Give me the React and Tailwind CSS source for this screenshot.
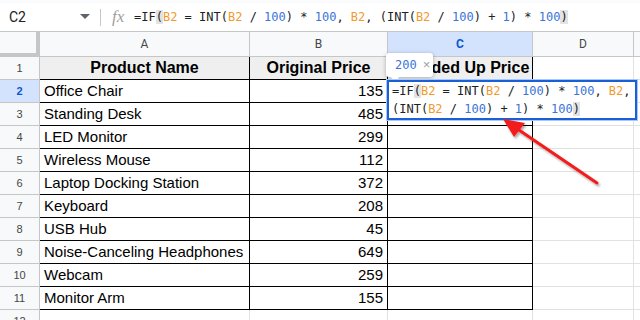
import React from "react";

const rows = [
  ["Office Chair", 135],
  ["Standing Desk", 485],
  ["LED Monitor", 299],
  ["Wireless Mouse", 112],
  ["Laptop Docking Station", 372],
  ["Keyboard", 208],
  ["USB Hub", 45],
  ["Noise-Canceling Headphones", 649],
  ["Webcam", 259],
  ["Monitor Arm", 155],
];

const mono = { fontFamily: '"DejaVu Sans Mono", "Liberation Mono", monospace' };

function Tok({ t, k }) {
  if (k === "o") return <span className="text-[#f29a2e]">{t}</span>;
  if (k === "b") return <span className="text-[#3a74d9]">{t}</span>;
  if (k === "h") return <span className="bg-[#e3e3e3]">{t}</span>;
  return <span>{t}</span>;
}

const line1 = [
  ["=IF"], ["(", "h"], ["B2", "o"], [" = INT("], ["B2", "o"], [" / "], ["100", "b"], [") * "], ["100", "b"], [", "], ["B2", "o"], [","],
];
const line2 = [
  ["(INT("], ["B2", "o"], [" / "], ["100", "b"], [") + "], ["1", "b"], [") * "], ["100", "b"], [")", "h"],
];
const full = [
  ...line1, [" "], ...line2,
];

function Cell({ w, className = "", children }) {
  return (
    <div className={`shrink-0 h-full flex items-center border-r border-b ${className}`} style={{ width: w }}>
      {children}
    </div>
  );
}

export default function App() {
  return (
    <div
      className="relative w-[640px] h-[320px] overflow-hidden bg-white text-[#202124]"
      style={{ fontFamily: '"Liberation Sans", Arial, sans-serif' }}
    >
      {/* formula bar */}
      <div className="h-[3px] bg-[#f9fbfd]" />
      <div className="h-[29px] flex items-center border-b border-[#c4c7c5]">
        <div className="w-[100px] flex items-center pl-[9px] pr-[10px] justify-between" style={{ fontFamily: "Roboto, sans-serif" }}>
          <span className="text-[14px] text-[#202124]">C2</span>
          <svg width="10" height="6" viewBox="0 0 10 6">
            <path d="M0 0 L10 0 L5 5 Z" fill="#5f6368" />
          </svg>
        </div>
        <div className="w-px h-[17px] bg-[#c4c7c5]" />
        <span className="ml-[11px] w-[22px] text-[17px] italic text-[#a0a0a0]" style={{ fontFamily: '"Liberation Serif", serif' }}>
          fx
        </span>
        <div className="text-[12px] whitespace-pre text-[#202124]" style={mono}>
          {full.map(([t, k], i) => <Tok key={i} t={t} k={k} />)}
        </div>
      </div>

      {/* column headers */}
      <div className="h-[25px] flex text-[12px] text-[#444746]" style={{ fontFamily: "Roboto, sans-serif" }}>
        <div className="w-[40px] shrink-0 h-full bg-[#f8f9fa] border-r-[4px] border-b-[4px] border-[#c4c7c5]" />
        <Cell w={210} className="justify-center bg-[#f8f9fa] border-[#c4c7c5]">A</Cell>
        <Cell w={138} className="justify-center bg-[#f8f9fa] border-[#c4c7c5]">B</Cell>
        <Cell w={145} className="justify-center bg-[#d3e3fd] border-[#c4c7c5] text-[#0b57d0] font-bold">C</Cell>
        <Cell w={101} className="justify-center bg-[#f8f9fa] border-[#c4c7c5]">D</Cell>
        <div className="flex-1 h-full bg-[#f8f9fa] border-b border-[#c4c7c5]" />
      </div>

      {/* row 1 */}
      <div className="h-[23px] flex">
        <Cell w={40} className="justify-center bg-[#f8f9fa] border-[#c4c7c5] text-[11px] text-[#444746]">1</Cell>
        <Cell w={210} className="justify-center bg-[#efefef] border-black font-bold text-[16px] text-black">Product Name</Cell>
        <Cell w={138} className="justify-center bg-[#efefef] border-black font-bold text-[16px] text-black">Original Price</Cell>
        <Cell w={145} className="justify-center bg-[#efefef] border-black font-bold text-[16px] text-black whitespace-nowrap overflow-hidden">Rounded Up Price</Cell>
        <Cell w={101} className="border-[#e1e1e1]" />
        <div className="flex-1 h-full border-b border-[#e1e1e1]" />
      </div>

      {rows.map(([name, price], i) => {
        const n = i + 2;
        const sel = n === 2;
        return (
          <div key={n} className="h-[23px] flex text-[15px] text-black">
            <Cell
              w={40}
              className={`justify-center border-[#c4c7c5] text-[11px] ${sel ? "bg-[#d3e3fd] text-[#0b57d0] font-bold" : "bg-[#f8f9fa] text-[#444746]"}`}
            >
              {n}
            </Cell>
            <Cell w={210} className="border-black pl-[4px] whitespace-nowrap">{name}</Cell>
            <Cell w={138} className="border-black justify-end pr-[4px]">{price}</Cell>
            <Cell w={145} className="border-black" />
            <Cell w={101} className="border-[#e1e1e1]" />
            <div className="flex-1 h-full border-b border-[#e1e1e1]" />
          </div>
        );
      })}

      {/* row 12 */}
      <div className="h-[23px] flex">
        <Cell w={40} className="justify-center items-start pt-[3px] bg-[#f8f9fa] border-[#c4c7c5] text-[11px] text-[#444746]">12</Cell>
        <Cell w={210} className="border-[#e1e1e1]" />
        <Cell w={138} className="border-[#e1e1e1]" />
        <Cell w={145} className="border-[#e1e1e1]" />
        <Cell w={101} className="border-[#e1e1e1]" />
      </div>

      {/* value preview tooltip */}
      <div className="absolute left-[386px] top-[53px] w-[47px] h-[24px] bg-white rounded-[3px] shadow-[0_1px_4px_rgba(0,0,0,0.3)] flex items-center pl-[9px] gap-[6px]">
        <span className="text-[12px] text-[#3a74d9]" style={mono}>200</span>
        <span className="text-[13px] text-[#9aa0a6]">×</span>
        <div className="absolute left-[4px] -bottom-[5px] w-0 h-0 border-l-[5px] border-r-[5px] border-t-[6px] border-l-transparent border-r-transparent border-t-white" />
      </div>

      {/* in-cell editor */}
      <div className="absolute left-[386px] top-[79px] w-[252px] h-[42px] border border-[#a8c7fa] bg-white">
        <div className="w-full h-full border-2 border-[#1a5fd6] pl-[3px] text-[12px] leading-[18px] whitespace-pre text-[#202124]" style={mono}>
          <div>{line1.map(([t, k], i) => <Tok key={i} t={t} k={k} />)}</div>
          <div>{line2.map(([t, k], i) => <Tok key={i} t={t} k={k} />)}</div>
        </div>
      </div>

      {/* red arrow */}
      <svg className="absolute left-0 top-0 pointer-events-none" width="640" height="320">
        <defs>
          <filter id="sh" x="-20%" y="-20%" width="140%" height="140%">
            <feDropShadow dx="1.5" dy="2" stdDeviation="1.2" floodColor="#000" floodOpacity="0.35" />
          </filter>
        </defs>
        <g filter="url(#sh)">
          <line x1="597" y1="183" x2="516" y2="128" stroke="#f21d1d" strokeWidth="3" strokeLinecap="round" />
          <path d="M503 119 L525 123 L514 137 Z" fill="#f21d1d" />
        </g>
      </svg>
    </div>
  );
}
